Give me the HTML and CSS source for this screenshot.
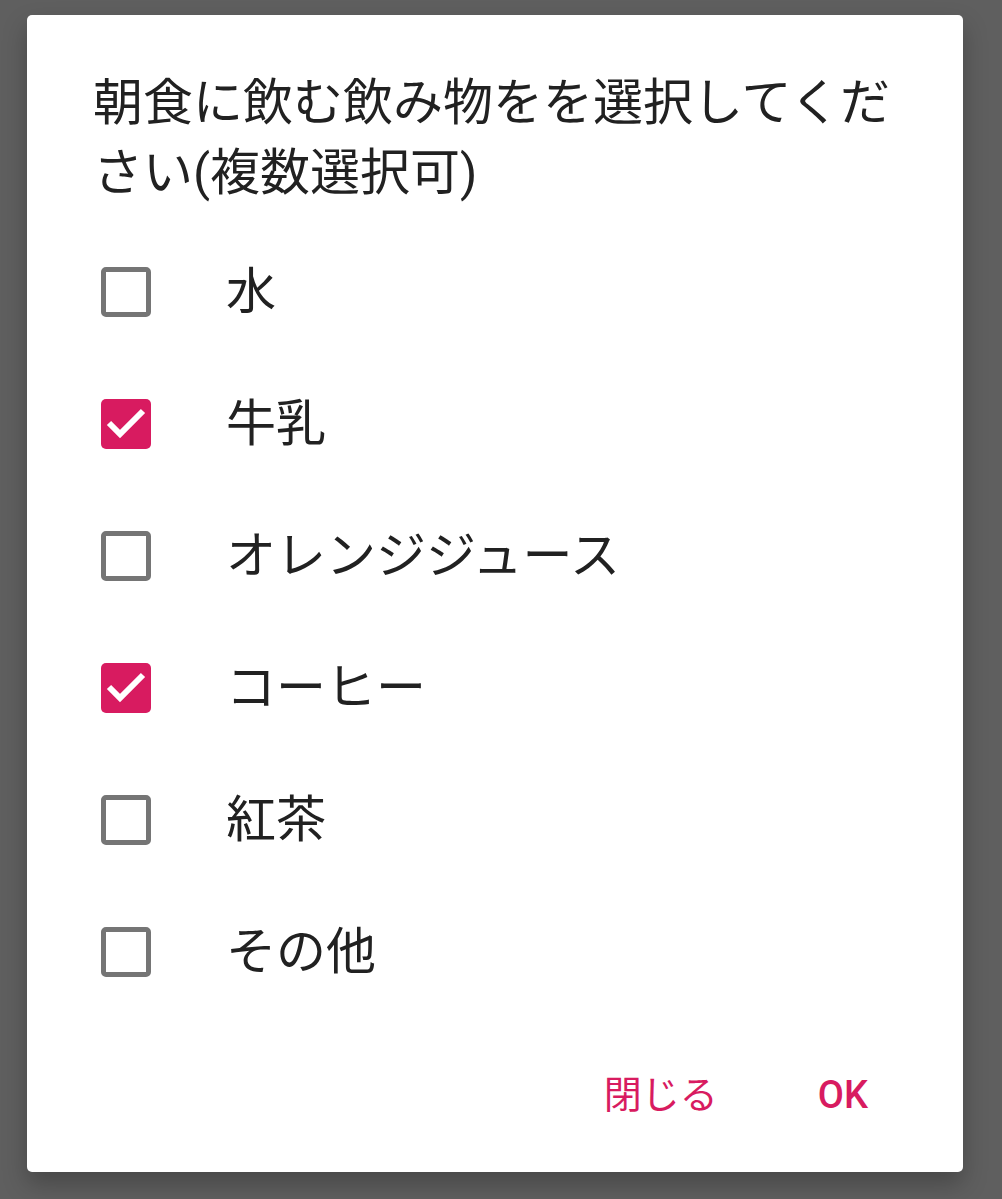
FILE: index.html
```html
<!DOCTYPE html>
<html lang="ja">
<head>
<meta charset="utf-8">
<title>Dialog</title>
<link rel="stylesheet" href="styles.css">
</head>
<body>
<div class="dialog">
  <h1 class="title">朝食に飲む飲み物をを選択してください(複数選択可)</h1>
  <ul class="options">
    <li class="option"><span class="box"></span><span class="label">水</span></li>
    <li class="option"><span class="box checked"><svg viewBox="0 0 50 50" width="50" height="50"><polyline points="8,24 19,35 42,12" fill="none" stroke="#fff" stroke-width="6"/></svg></span><span class="label">牛乳</span></li>
    <li class="option"><span class="box"></span><span class="label">オレンジジュース</span></li>
    <li class="option"><span class="box checked"><svg viewBox="0 0 50 50" width="50" height="50"><polyline points="8,24 19,35 42,12" fill="none" stroke="#fff" stroke-width="6"/></svg></span><span class="label">コーヒー</span></li>
    <li class="option"><span class="box"></span><span class="label">紅茶</span></li>
    <li class="option"><span class="box"></span><span class="label">その他</span></li>
  </ul>
  <div class="actions">
    <span class="btn">閉じる</span>
    <span class="btn ok">OK</span>
  </div>
</div>
</body>
</html>
```

FILE: styles.css
```css
html, body {
  margin: 0;
  padding: 0;
}
body {
  background: #5f5f5f;
  height: 1199px;
  overflow: hidden;
  font-family: Roboto, "Noto Sans CJK JP", sans-serif;
  color: #212121;
}
.dialog {
  box-sizing: border-box;
  margin: 15px 0 0 27px;
  width: 936px;
  height: 1157px;
  background: #fff;
  border-radius: 5px;
  box-shadow: 0 12px 24px rgba(0, 0, 0, 0.25);
  padding: 53px 0 0 0;
  display: flex;
  flex-direction: column;
}
.title {
  margin: 0;
  padding: 0 60px 0 66px;
  font-size: 50px;
  font-weight: 400;
  line-height: 70px;
  letter-spacing: 0;
}
.options {
  list-style: none;
  margin: 18px 0 0 0;
  padding: 0;
}
.option {
  height: 132px;
  display: flex;
  align-items: center;
  padding-left: 74px;
}
.box {
  box-sizing: border-box;
  width: 50px;
  height: 50px;
  border: 5px solid #757575;
  border-radius: 5px;
  flex: none;
  position: relative;
}
.box.checked {
  border: none;
  background: #d81b60;
}
.box svg {
  display: block;
}
.label {
  margin-left: 75px;
  font-size: 50px;
  line-height: 60px;
}
.actions {
  margin-top: auto;
  margin-bottom: 32px;
  height: 90px;
  display: flex;
  justify-content: flex-end;
  align-items: center;
  gap: 100px;
  padding-right: 95px;
}
.btn {
  color: #d81b60;
  font-size: 38px;
  line-height: 50px;
}
.btn.ok {
  font-weight: 500;
}
```
